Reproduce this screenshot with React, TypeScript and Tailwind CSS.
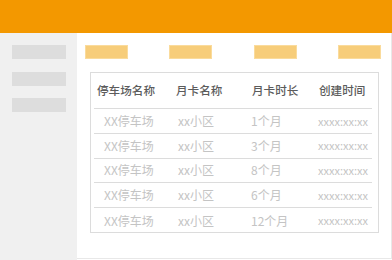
import React from 'react';

interface Row {
  park: string;
  area: string;
  term: string;
  created: string;
}

const rows: Row[] = [
  { park: 'XX停车场', area: 'xx小区', term: '1个月', created: 'xxxx:xx:xx' },
  { park: 'XX停车场', area: 'xx小区', term: '3个月', created: 'xxxx:xx:xx' },
  { park: 'XX停车场', area: 'xx小区', term: '8个月', created: 'xxxx:xx:xx' },
  { park: 'XX停车场', area: 'xx小区', term: '6个月', created: 'xxxx:xx:xx' },
  { park: 'XX停车场', area: 'xx小区', term: '12个月', created: 'xxxx:xx:xx' },
];

const font = { fontFamily: '"Noto Sans CJK SC", "Noto Sans", sans-serif' };

const App: React.FC = () => {
  return (
    <div className="w-[392px] h-[260px] flex flex-col bg-white overflow-hidden" style={font}>
      {/* top bar */}
      <div className="h-[33px] flex-shrink-0 bg-[#f39800]" />

      <div className="flex flex-1 min-h-0">
        {/* sidebar */}
        <div className="w-[77px] flex-shrink-0 bg-[#f0f0f0] flex flex-col gap-[12.5px] pt-[12px] pl-[12px]">
          <div className="w-[54px] h-[14px] bg-[#dddddd]" />
          <div className="w-[54px] h-[14px] bg-[#dddddd]" />
          <div className="w-[54px] h-[14px] bg-[#dddddd]" />
        </div>

        {/* main */}
        <div className="flex-1 flex flex-col border-r border-b border-[#e8e8e8] mb-[1px]">
          <div className="flex gap-[41.3px] pt-[12px] pl-[8px]">
            <div className="w-[43px] h-[14px] bg-[#f7cd7a] border border-[#fadb9c]" />
            <div className="w-[43px] h-[14px] bg-[#f7cd7a] border border-[#fadb9c]" />
            <div className="w-[43px] h-[14px] bg-[#f7cd7a] border border-[#fadb9c]" />
            <div className="w-[43px] h-[14px] bg-[#f7cd7a] border border-[#fadb9c]" />
          </div>

          <div className="mt-[13px] ml-[13px] mr-[12px] h-[161px] border border-[#dcdcdc] pl-[3px] pr-[6px]">
            <div className="h-[36px] flex items-center border-b border-[#dcdcdc] text-[11.6px] font-medium text-[#5c5c5c]">
              <div className="w-[80px] pl-[3px]">停车场名称</div>
              <div className="w-[75px] pl-[2px]">月卡名称</div>
              <div className="w-[67px] pl-[3px]">月卡时长</div>
              <div className="flex-1 pl-[3px]">创建时间</div>
            </div>
            {rows.map((r, i) => (
              <div
                key={i}
                className={`h-[24.8px] flex items-center text-[12px] text-[#c4c4c4] ${i < rows.length - 1 ? 'border-b border-[#dcdcdc]' : ''}`}
              >
                <div className="w-[80px] pl-[10px]">{r.park}</div>
                <div className="w-[75px] pl-[4px]">{r.area}</div>
                <div className="w-[67px] pl-[2px]">{r.term}</div>
                <div className="flex-1 pl-[2px] text-[11px]">{r.created}</div>
              </div>
            ))}
          </div>
        </div>
      </div>
    </div>
  );
};

export default App;
